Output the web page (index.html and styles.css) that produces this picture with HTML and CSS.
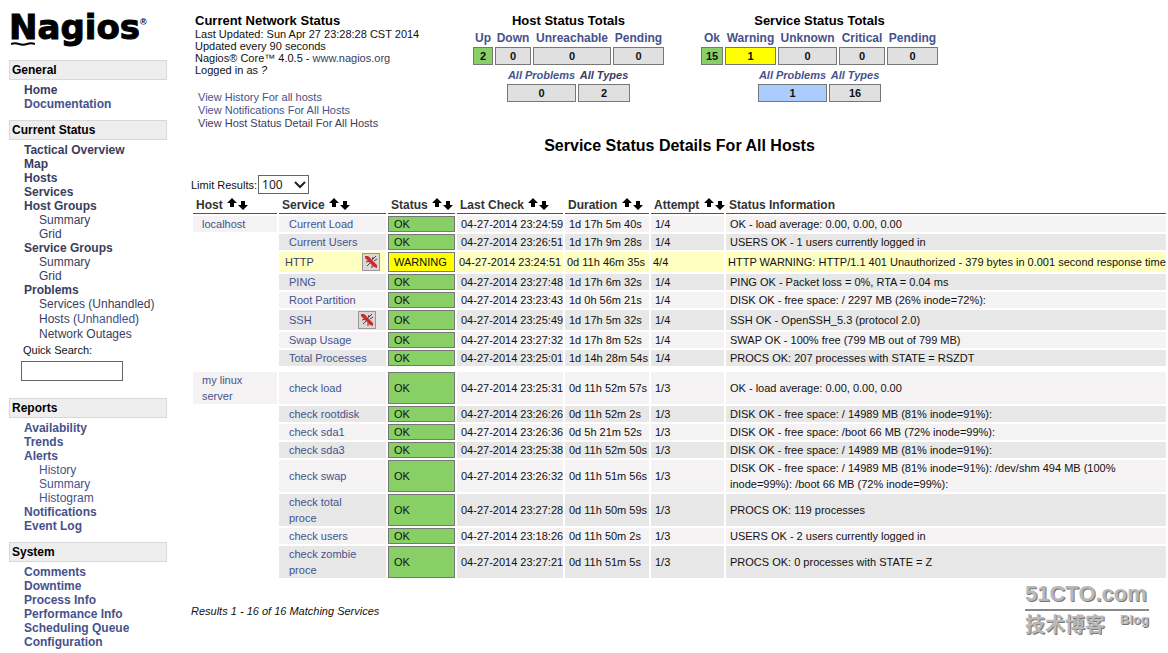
FILE: index.html
```html
<!DOCTYPE html>
<html lang="en">
<head>
<meta charset="utf-8">
<title>Nagios - Current Network Status</title>
<link rel="stylesheet" href="styles.css">
</head>
<body>
<svg class="defs" aria-hidden="true">
  <symbol id="sort" viewBox="0 0 22 12"><path d="M6 0 11 5H8V9H4V5H1Z"/><path d="M15 3h4v4h3l-5 5-5-5h3Z"/></symbol>
  <symbol id="muted" viewBox="0 0 18 18"><rect x=".5" y=".5" width="17" height="17" fill="#dcd6d6" stroke="#9a9696"/><path d="M7 4l1 4M11 4l-1 3M4 9l4-1M12 8l3-2M5 13l3-3M12 11l2 2M10 12v3M14 3l-3 3" stroke="#444" fill="none"/><path d="M3 3l3 0 9 9 0 3-3-1-9-9Z" fill="#d02a2a"/></symbol>
</svg>
<div class="page">
<aside class="sidebar">
  <a class="logo" href="#">Nagios<span class="reg">®</span>
    <svg class="logo-line" viewBox="0 0 24 4"><path d="M0 2Q4 .5 8 2t8 0 8 0" fill="none" stroke="#000" stroke-width="2"/></svg></a>
  <nav>
    <section class="group">
      <h2>General</h2>
      <ul><li><a class="seen" href="#">Home</a></li><li><a href="#">Documentation</a></li></ul>
    </section>
    <section class="group">
      <h2>Current Status</h2>
      <ul class="seen">
        <li><a href="#">Tactical Overview</a></li><li><a href="#">Map</a></li><li><a href="#">Hosts</a></li><li><a href="#">Services</a></li>
        <li><a href="#">Host Groups</a><ul><li><a href="#">Summary</a></li><li><a href="#">Grid</a></li></ul></li>
        <li><a href="#">Service Groups</a><ul><li><a href="#">Summary</a></li><li><a href="#">Grid</a></li></ul></li>
        <li><a href="#">Problems</a><ul class="problems"><li><a href="#">Services</a> (<a href="#">Unhandled</a>)</li><li><a href="#">Hosts</a> (<a class="fresh" href="#">Unhandled</a>)</li><li><a href="#">Network Outages</a></li></ul></li>
      </ul>
      <form class="search"><label for="quick">Quick Search:</label><input id="quick" type="text"></form>
    </section>
    <section class="group">
      <h2>Reports</h2>
      <ul>
        <li><a href="#">Availability</a></li><li><a href="#">Trends</a></li>
        <li><a href="#">Alerts</a><ul><li><a href="#">History</a></li><li><a href="#">Summary</a></li><li><a href="#">Histogram</a></li></ul></li>
        <li><a href="#">Notifications</a></li><li><a href="#">Event Log</a></li>
      </ul>
    </section>
    <section class="group">
      <h2>System</h2>
      <ul><li><a href="#">Comments</a></li><li><a href="#">Downtime</a></li><li><a href="#">Process Info</a></li><li><a href="#">Performance Info</a></li><li><a href="#">Scheduling Queue</a></li><li><a href="#">Configuration</a></li></ul>
    </section>
  </nav>
</aside>

<main class="main">
  <header class="top">
    <div class="info">
      <h3>Current Network Status</h3>
      <p>Last Updated: Sun Apr 27 23:28:28 CST 2014<br>Updated every 90 seconds<br>Nagios® Core™ 4.0.5 - <a class="seen" href="#">www.nagios.org</a><br>Logged in as <i>?</i></p>
      <div class="views"><a href="#">View History For all hosts</a><a href="#">View Notifications For All Hosts</a><a class="seen" href="#">View Host Status Detail For All Hosts</a></div>
    </div>
    <section class="totals">
      <h3>Host Status Totals</h3>
      <table class="counts">
        <colgroup><col class="w20"><col class="w36"><col class="w78"><col class="w51"></colgroup>
        <tr><th><a href="#">Up</a></th><th><a href="#">Down</a></th><th><a href="#">Unreachable</a></th><th><a href="#">Pending</a></th></tr>
        <tr><td class="ok">2</td><td>0</td><td>0</td><td>0</td></tr>
      </table>
      <table class="counts sums">
        <colgroup><col class="w69"><col class="w52"></colgroup>
        <tr><th><a href="#">All Problems</a></th><th><a class="seen" href="#">All Types</a></th></tr>
        <tr><td>0</td><td>2</td></tr>
      </table>
    </section>
    <section class="totals">
      <h3>Service Status Totals</h3>
      <table class="counts">
        <colgroup><col class="w22"><col class="w51"><col class="w59"><col class="w46"><col class="w51"></colgroup>
        <tr><th><a href="#">Ok</a></th><th><a href="#">Warning</a></th><th><a href="#">Unknown</a></th><th><a href="#">Critical</a></th><th><a href="#">Pending</a></th></tr>
        <tr><td class="ok">15</td><td class="warn">1</td><td>0</td><td>0</td><td>0</td></tr>
      </table>
      <table class="counts sums">
        <colgroup><col class="w69"><col class="w52"></colgroup>
        <tr><th><a href="#">All Problems</a></th><th><a href="#">All Types</a></th></tr>
        <tr><td class="problem">1</td><td>16</td></tr>
      </table>
    </section>
  </header>

  <h1>Service Status Details For All Hosts</h1>

  <form class="limit"><label for="limit">Limit Results:</label>
    <span class="select"><select id="limit"><option>100</option><option>50</option><option>All</option></select><svg viewBox="0 0 12 8"><path d="M1 1l5 5 5-5" fill="none" stroke="#222" stroke-width="2"/></svg></span>
  </form>

  <table class="status">
    <colgroup><col class="c-host"><col class="c-service"><col class="c-status"><col class="c-check"><col class="c-duration"><col class="c-attempt"><col></colgroup>
    <thead>
      <tr><th>Host <svg><use href="#sort"/></svg></th><th>Service <svg><use href="#sort"/></svg></th><th>Status <svg><use href="#sort"/></svg></th><th>Last Check <svg><use href="#sort"/></svg></th><th>Duration <svg><use href="#sort"/></svg></th><th>Attempt <svg><use href="#sort"/></svg></th><th>Status Information</th></tr>
    </thead>
    <tbody>
      <tr><td class="host"><a href="#">localhost</a></td><td class="svc"><a href="#">Current Load</a></td><td class="st">OK</td><td>04-27-2014 23:24:59</td><td>1d 17h 5m 40s</td><td>1/4</td><td>OK - load average: 0.00, 0.00, 0.00</td></tr>
      <tr class="even"><td class="none"></td><td class="svc"><a href="#">Current Users</a></td><td class="st">OK</td><td>04-27-2014 23:26:51</td><td>1d 17h 9m 28s</td><td>1/4</td><td>USERS OK - 1 users currently logged in</td></tr>
      <tr class="warning"><td class="none"></td><td class="svc"><div class="flagged"><a class="seen" href="#">HTTP</a><svg><use href="#muted"/></svg></div></td><td class="st">WARNING</td><td>04-27-2014 23:24:51</td><td>0d 11h 46m 35s</td><td>4/4</td><td>HTTP WARNING: HTTP/1.1 401 Unauthorized - 379 bytes in 0.001 second response time</td></tr>
      <tr class="even"><td class="none"></td><td class="svc"><a href="#">PING</a></td><td class="st">OK</td><td>04-27-2014 23:27:48</td><td>1d 17h 6m 32s</td><td>1/4</td><td>PING OK - Packet loss = 0%, RTA = 0.04 ms</td></tr>
      <tr><td class="none"></td><td class="svc"><a href="#">Root Partition</a></td><td class="st">OK</td><td>04-27-2014 23:23:43</td><td>1d 0h 56m 21s</td><td>1/4</td><td>DISK OK - free space: / 2297 MB (26% inode=72%):</td></tr>
      <tr class="even"><td class="none"></td><td class="svc"><div class="flagged"><a href="#">SSH</a><svg><use href="#muted"/></svg></div></td><td class="st">OK</td><td>04-27-2014 23:25:49</td><td>1d 17h 5m 32s</td><td>1/4</td><td>SSH OK - OpenSSH_5.3 (protocol 2.0)</td></tr>
      <tr><td class="none"></td><td class="svc"><a href="#">Swap Usage</a></td><td class="st">OK</td><td>04-27-2014 23:27:32</td><td>1d 17h 8m 52s</td><td>1/4</td><td>SWAP OK - 100% free (799 MB out of 799 MB)</td></tr>
      <tr class="even"><td class="none"></td><td class="svc"><a href="#">Total Processes</a></td><td class="st">OK</td><td>04-27-2014 23:25:01</td><td>1d 14h 28m 54s</td><td>1/4</td><td>PROCS OK: 207 processes with STATE = RSZDT</td></tr>
      <tr class="gap"><td class="none" colspan="7"></td></tr>
      <tr><td class="host"><a href="#">my linux<br>server</a></td><td class="svc"><a href="#">check load</a></td><td class="st">OK</td><td>04-27-2014 23:25:31</td><td>0d 11h 52m 57s</td><td>1/3</td><td>OK - load average: 0.00, 0.00, 0.00</td></tr>
      <tr class="even"><td class="none"></td><td class="svc"><a href="#">check rootdisk</a></td><td class="st">OK</td><td>04-27-2014 23:26:26</td><td>0d 11h 52m 2s</td><td>1/3</td><td>DISK OK - free space: / 14989 MB (81% inode=91%):</td></tr>
      <tr><td class="none"></td><td class="svc"><a href="#">check sda1</a></td><td class="st">OK</td><td>04-27-2014 23:26:36</td><td>0d 5h 21m 52s</td><td>1/3</td><td>DISK OK - free space: /boot 66 MB (72% inode=99%):</td></tr>
      <tr class="even"><td class="none"></td><td class="svc"><a href="#">check sda3</a></td><td class="st">OK</td><td>04-27-2014 23:25:38</td><td>0d 11h 52m 50s</td><td>1/3</td><td>DISK OK - free space: / 14989 MB (81% inode=91%):</td></tr>
      <tr><td class="none"></td><td class="svc"><a href="#">check swap</a></td><td class="st">OK</td><td>04-27-2014 23:26:32</td><td>0d 11h 51m 56s</td><td>1/3</td><td>DISK OK - free space: / 14989 MB (81% inode=91%): /dev/shm 494 MB (100% inode=99%): /boot 66 MB (72% inode=99%):</td></tr>
      <tr class="even"><td class="none"></td><td class="svc"><a href="#">check total<br>proce</a></td><td class="st">OK</td><td>04-27-2014 23:27:28</td><td>0d 11h 50m 59s</td><td>1/3</td><td>PROCS OK: 119 processes</td></tr>
      <tr><td class="none"></td><td class="svc"><a href="#">check users</a></td><td class="st">OK</td><td>04-27-2014 23:18:26</td><td>0d 11h 50m 2s</td><td>1/3</td><td>USERS OK - 2 users currently logged in</td></tr>
      <tr class="even"><td class="none"></td><td class="svc"><a href="#">check zombie<br>proce</a></td><td class="st">OK</td><td>04-27-2014 23:27:21</td><td>0d 11h 51m 5s</td><td>1/3</td><td>PROCS OK: 0 processes with STATE = Z</td></tr>
    </tbody>
  </table>
  <p class="results">Results 1 - 16 of 16 Matching Services</p>
</main>
</div>
<div class="watermark"><div class="site">51CTO.com</div><div class="sub"><span lang="zh">技术博客</span><span class="blog">Blog</span></div></div>
</body>
</html>
```
FILE: styles.css
```css
* { box-sizing: border-box; }
body { margin: 0; background: #fff; color: #111; font: 11px/12px "Liberation Sans", Arial, sans-serif; position: relative; overflow-x: hidden; }
h1, h2, h3, p, ul { margin: 0; padding: 0; }
ul { list-style: none; }
a { color: #46528c; text-decoration: none; }
.seen, .seen a { color: #3a3d5c; }
.seen a.fresh { color: #46528c; }
.defs { position: absolute; width: 0; height: 0; }
.page { display: flex; gap: 24px; }

.sidebar { flex: 0 0 167px; padding: 8px 0 4px 9px; }
.logo { display: block; position: relative; height: 52px; color: #000; font: bold 34px/38px "DejaVu Sans", sans-serif; -webkit-text-stroke: 1px #000; }
.logo .reg { position: absolute; top: 8px; left: 131px; font: bold 9px/12px "Liberation Sans", sans-serif; -webkit-text-stroke: 0; }
.logo-line { position: absolute; left: 2px; top: 34px; width: 24px; height: 4px; }
.group { font-size: 12px; line-height: 14px; font-weight: bold; margin-bottom: 9px; }
.group h2 { height: 20px; margin-bottom: 3px; padding-left: 2px; border: 1px solid #d8d8d8; background: #eee; color: #000; font-size: 12px; line-height: 18px; }
.group ul { padding-left: 15px; }
.group ul ul { font-weight: normal; }
.problems li { line-height: 15px; }
.search { display: flex; flex-direction: column; padding: 1px 12px 8px; font-size: 11px; font-weight: normal; }
.search label { padding-left: 2px; line-height: 14px; margin-bottom: 4px; }
.search input { width: 102px; height: 20px; border: 1px solid #666; padding: 1px 3px; }

.main { flex: 1; min-width: 0; padding-top: 13px; }
.top { display: flex; align-items: flex-start; }
.top h3 { font-size: 13px; line-height: 15px; color: #000; }
.info { flex: 0 0 280px; padding-left: 4px; }
.views { display: flex; flex-direction: column; padding: 15px 0 0 3px; line-height: 13px; }
.totals { display: flex; flex-direction: column; align-items: center; margin-right: 33px; }
.counts { border-collapse: separate; border-spacing: 2px 0; table-layout: fixed; width: 1px; text-align: center; font-weight: bold; }
.counts th { height: 19px; padding: 0; font-size: 12px; white-space: nowrap; }
.counts th a { display: flex; justify-content: center; }
.counts td { height: 18px; padding: 0; border: 1px solid #777; background: #e0e0e0; }
.sums th { font-size: 11px; font-style: italic; }
.counts .ok { background: #88d066; }
.counts .warn { background: #ff0; }
.counts .problem { background: #aaccff; }
.w20 { width: 20px; } .w22 { width: 22px; } .w36 { width: 36px; } .w46 { width: 46px; } .w51 { width: 51px; }
.w52 { width: 52px; } .w59 { width: 59px; } .w69 { width: 69px; } .w78 { width: 78px; }
h1 { margin-top: 6px; text-align: center; font-size: 16px; line-height: 20px; color: #000; }

.limit { display: flex; align-items: center; gap: 1px; margin-top: 19px; }
.select { position: relative; display: flex; }
.select select { appearance: none; width: 51px; height: 19px; padding: 0 3px; border: 1px solid #666; border-radius: 0; background: #fff; color: #222; font: 12px "Noto Sans", sans-serif; }
.select svg { position: absolute; right: 3px; top: 6px; width: 12px; height: 8px; pointer-events: none; }

.status { width: 100%; table-layout: fixed; border-collapse: separate; border-spacing: 2px; line-height: 16px; }
.c-host { width: 84px; } .c-service { width: 107px; } .c-status { width: 67px; } .c-check { width: 106px; } .c-duration { width: 84px; } .c-attempt { width: 73px; }
.status th { height: 18px; padding: 0 0 0 3px; border-bottom: 1px solid #555; text-align: left; font-size: 12px; line-height: 16px; color: #333; white-space: nowrap; }
.status th svg { width: 22px; height: 12px; fill: #000; vertical-align: -1px; }
.status td { padding: 0 0 0 4px; background: #f4f2f3; white-space: nowrap; }
.status td:last-child { white-space: normal; }
.status .even td { background: #e7e7e7; }
.status .warning td { background: #feffc1; padding: 0 0 0 2px; white-space: nowrap; }
.status td.none, .status .even td.none, .status .warning td.none { background: none; }
.status td.host { padding-left: 9px; }
.status td.svc { padding: 0 10px; }
.status .warning td.svc { padding: 0 6px; }
.status tr td.st { padding: 0 5px; line-height: 14px; border: 1px solid #777; background: #88d066; }
.status .warning td.st { background: #ff0; }
.status .gap td { height: 2px; padding: 0; }
.flagged { display: flex; align-items: center; justify-content: space-between; height: 20px; }
.flagged svg { width: 18px; height: 18px; }
.results { margin-top: 25px; font-style: italic; }

.watermark { position: absolute; right: 19px; top: 579px; width: 124px; color: #b8b8b8; text-shadow: 1px 1px 0 #777; font-weight: bold; }
.site { border-bottom: 2px solid #888; font: bold 22px/30px "Liberation Sans Narrow", "Liberation Sans", sans-serif; }
.sub { display: flex; justify-content: space-between; align-items: flex-start; }
.sub span { font: bold 20px/26px "Noto Sans CJK SC", sans-serif; }
.sub .blog { font: bold 13px/18px "Liberation Sans", sans-serif; }
```
